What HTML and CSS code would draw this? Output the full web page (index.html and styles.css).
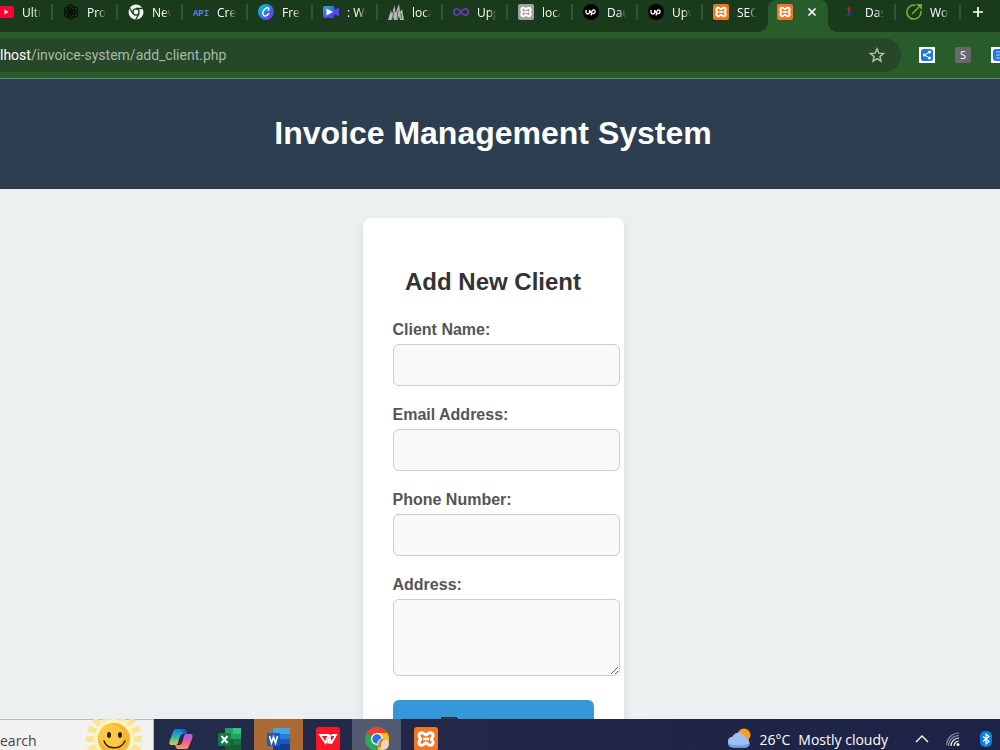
FILE: index.html
```
<!DOCTYPE html>
<html lang="en">
<head>
    <meta charset="UTF-8">
    <meta name="viewport" content="width=device-width, initial-scale=1.0">
    <title>Invoice Management System</title>
    <link rel="stylesheet" href="styles.css">
</head>
<body>
    <!-- Shared icons -->
    <svg class="sprite" aria-hidden="true">
        <symbol id="xampp" viewBox="0 0 16 16">
            <rect width="16" height="16" rx="2" fill="currentColor"/>
            <path d="M5.300 3.800C6.800 3.800 7 5.300 8 5.300S9.200 3.800 10.700 3.800c1.300 0 2 .9 2 2.100S11.500 7.500 11.500 8s1.200.9 1.200 2.100-.7 2.100-2 2.100c-1.500 0-1.700-1.500-2.700-1.500s-1.200 1.500-2.700 1.500c-1.300 0-2-.9-2-2.100S4.500 8.500 4.500 8 3.300 7.100 3.300 5.900s.7-2.100 2-2.100z" fill="none" stroke="#fff" stroke-width="2"/>
            <path d="M6 8h4" stroke="#fff" stroke-width="1.800"/>
        </symbol>
        <symbol id="upwork" viewBox="0 0 16 16">
            <circle cx="8" cy="8" r="8" fill="#000"/>
            <path d="M3 6v2.200c0 2.400 3.600 2.400 3.600 0V6c.9 2.200 1.600 3.500 3.200 3.700 2.600.2 3.300-3.700.7-3.900C8.600 5.700 8.600 8 8.200 11.500" fill="none" stroke="#fff" stroke-width="1.300"/>
        </symbol>
    </svg>

    <nav class="tabs">
        <button class="tab">
            <svg viewBox="0 0 16 16"><rect y="2" width="16" height="12" rx="3" fill="#ff0033"/><path d="M6.500 5.500v5l4-2.500z" fill="#fff"/></svg>
            <span>Ultra</span>
        </button>
        <button class="tab">
            <svg viewBox="0 0 16 16" fill="none" stroke="#0a120b" stroke-width="1.400"><ellipse cx="8" cy="5" rx="3.300" ry="4"/><ellipse cx="8" cy="11" rx="3.300" ry="4"/><ellipse cx="5.300" cy="6.500" rx="4" ry="3.300" transform="rotate(30 5.300 6.500)"/><ellipse cx="10.700" cy="9.500" rx="4" ry="3.300" transform="rotate(30 10.700 9.500)"/><ellipse cx="10.700" cy="6.500" rx="4" ry="3.300" transform="rotate(-30 10.700 6.500)"/><ellipse cx="5.300" cy="9.500" rx="4" ry="3.300" transform="rotate(-30 5.300 9.500)"/></svg>
            <span>Proje</span>
        </button>
        <button class="tab">
            <svg viewBox="0 0 16 16"><circle cx="8" cy="8" r="7.500" fill="#f2f4f2"/><circle cx="8" cy="8" r="3.700" fill="#1a3a1c"/><circle cx="8" cy="8" r="2.400" fill="#f2f4f2"/><path d="M8 4.500h6.800M4.900 9.800L1.600 4M11 9.800L7.800 15.500" stroke="#1a3a1c" stroke-width="1.300"/></svg>
            <span>New</span>
        </button>
        <button class="tab">
            <svg viewBox="0 0 16 16"><text class="api-mark" x="8" y="12" text-anchor="middle" fill="#5b83e0">API</text></svg>
            <span>Crea</span>
        </button>
        <button class="tab">
            <svg viewBox="0 0 16 16"><defs><linearGradient id="canva" x1="0" y1="0" x2="1" y2="1"><stop offset=".1" stop-color="#00c8d4"/><stop offset=".55" stop-color="#326fe8"/><stop offset=".9" stop-color="#7d2ae8"/></linearGradient></defs><circle cx="8" cy="8" r="8" fill="url(#canva)"/><path d="M10.300 6.300c1.300-1.400.3-3-1.300-2.600C6 4.500 4.300 8.300 5 10.500c.8 2.700 4.200 1.700 5.700-.8" fill="none" stroke="#fff" stroke-width="1.400" stroke-linecap="round"/></svg>
            <span>Free</span>
        </button>
        <button class="tab">
            <svg viewBox="0 0 16 16"><defs><linearGradient id="clip" x1="0" y1="0" x2="1" y2="1"><stop offset="0" stop-color="#12b8dc"/><stop offset=".6" stop-color="#4a4cf0"/><stop offset="1" stop-color="#7a25e8"/></linearGradient></defs><path d="M2 2h7.500a2 2 0 0 1 2 2v2L16 3.500v9L11.500 10v2a2 2 0 0 1-2 2H2a2 2 0 0 1-2-2V4a2 2 0 0 1 2-2z" fill="url(#clip)"/><path d="M3.500 4.500v7L10 8z" fill="#fff"/></svg>
            <span>: Wor</span>
        </button>
        <button class="tab">
            <svg viewBox="0 0 16 16"><path d="M0 16L3 6l1 4L6.500 1l1 8L11 0l1 8 2-3 2 11h-4l-1-4-1.500 4H6l-1-4-1.500 4z" fill="#b8bab8"/><path d="M4 16l2-9M9 15l1-9M13.500 15l-.5-6" stroke="#56685a" stroke-width="1"/></svg>
            <span>local</span>
        </button>
        <button class="tab">
            <svg viewBox="0 0 16 16"><path d="M8 8C6.500 5.700 5.500 4.800 4 4.800a3.200 3.200 0 0 0 0 6.400c1.500 0 2.500-.9 4-3.200s2.500-3.200 4-3.200a3.200 3.200 0 0 1 0 6.400c-1.500 0-2.500-.9-4-3.200z" fill="none" stroke="#673db3" stroke-width="1.700"/></svg>
            <span>Upgr</span>
        </button>
        <button class="tab">
            <svg class="muted-logo"><use href="#xampp"/></svg>
            <span>local</span>
        </button>
        <button class="tab">
            <svg><use href="#upwork"/></svg>
            <span>Dau</span>
        </button>
        <button class="tab">
            <svg><use href="#upwork"/></svg>
            <span>Upw</span>
        </button>
        <button class="tab before-active">
            <svg class="xampp-logo"><use href="#xampp"/></svg>
            <span>SEO</span>
        </button>
        <button class="tab active" aria-label="Add client">
            <svg class="xampp-logo"><use href="#xampp"/></svg>
            <svg class="close" viewBox="0 0 16 16"><path d="M4.500 4.500l7 7M11.500 4.500l-7 7" stroke="#fff" stroke-width="1.700"/></svg>
        </button>
        <button class="tab">
            <svg viewBox="0 0 16 16"><path d="M2 11.500l4-1.500h4l4 1.500-4 .5H6z" fill="#153f64"/><path d="M7 8h2l1 3H6z" fill="#174c80"/><path d="M8 2c2 2 2 4 .7 6H7.300C6 6 6.500 4 8 2z" fill="#b52323"/></svg>
            <span>Dash</span>
        </button>
        <button class="tab">
            <svg viewBox="0 0 16 16" fill="none" stroke="#6fad2b" stroke-width="1.700"><path d="M9.500 1.300A7 7 0 1 0 14.800 7"/><path d="M6 10l7-7"/><path d="M10 0h6v6z" fill="#6fad2b" stroke="none"/></svg>
            <span>Woo</span>
        </button>
        <button class="new-tab" aria-label="New tab">
            <svg viewBox="0 0 16 16"><path d="M8 3v10M3 8h10" stroke="#fff" stroke-width="1.700"/></svg>
        </button>
    </nav>

    <div class="toolbar">
        <div class="address-bar">
            <div class="url" role="textbox" aria-label="Address and search bar"><span class="host">lhost</span>/invoice-system/add_client.php</div>
            <button aria-label="Bookmark this tab">
                <svg viewBox="0 0 16 16"><path d="M8 1.800l1.800 4.300 4.700.4-3.600 3.100 1.100 4.600L8 11.700l-4 2.500 1.100-4.600-3.600-3.100 4.700-.4z" fill="none" stroke="#b4c2b5" stroke-width="1.400"/></svg>
            </button>
        </div>
        <div class="extensions">
            <button aria-label="Share">
                <svg viewBox="0 0 16 16"><rect width="16" height="16" fill="#fff"/><rect x="2" y="2" width="12" height="12" rx="2.500" fill="#1b78e8"/><path d="M10.500 5L5.500 8l5 3" fill="none" stroke="#fff"/><g fill="#fff"><circle cx="5.500" cy="8" r="1.500"/><circle cx="10.500" cy="5" r="1.500"/><circle cx="10.500" cy="11" r="1.500"/></g></svg>
            </button>
            <button class="ext-s">S</button>
            <button aria-label="Extension">
                <svg viewBox="0 0 16 16"><rect width="16" height="16" fill="#fff"/><rect x="2" y="2" width="12" height="12" rx="3" fill="#1b78e8"/><path d="M5 5h7M5 8h7M5 11h7" stroke="#b7d5fa"/></svg>
            </button>
        </div>
    </div>

    <main class="page">
        <header>
            <h1>Invoice Management System</h1>
        </header>
        <form class="card">
            <h2>Add New Client</h2>

            <label for="name">Client Name:</label>
            <input type="text" id="name" name="name">

            <label for="email">Email Address:</label>
            <input type="email" id="email" name="email">

            <label for="phone">Phone Number:</label>
            <input type="text" id="phone" name="phone">

            <label for="address">Address:</label>
            <textarea id="address" name="address"></textarea>

            <button type="submit" aria-label="Save client">
                <svg viewBox="0 0 18 18"><path d="M1 1h14l2 2v14H1z" fill="#c9ced3" stroke="#111" stroke-width="1.500"/></svg>
            </button>
        </form>
    </main>

    <footer class="taskbar">
        <div class="search">
            <input type="text" placeholder="earch" aria-label="Search">
            <svg viewBox="0 0 60 60">
                <g stroke="#fbe594" stroke-width="6"><path d="M30 2v56M2 30h56M10 10l40 40M50 10L10 50M19 4l22 52M41 4L19 56M4 19l52 22M4 41l52-22"/></g>
                <circle cx="30" cy="30" r="20" fill="#fff3bd"/>
                <circle cx="30" cy="30" r="16" fill="#f9b52c"/>
                <circle cx="27" cy="27" r="12" fill="#fdc944"/>
                <ellipse cx="25" cy="26" rx="2" ry="3" fill="#2b2118"/><ellipse cx="36" cy="26" rx="2" ry="3" fill="#2b2118"/>
                <path d="M20 32c3 9 17 9 21 0" fill="none" stroke="#2b2118" stroke-width="1.500" stroke-linecap="round"/>
            </svg>
        </div>
        <div class="apps">
            <button aria-label="Copilot">
                <svg viewBox="0 0 24 24"><defs><linearGradient id="cop1" x1="0" y1="0" x2="0" y2="1"><stop offset="0" stop-color="#1976dd"/><stop offset=".5" stop-color="#2bb8b0"/><stop offset="1" stop-color="#f2c62c"/></linearGradient><linearGradient id="cop2" x1="0" y1="0" x2="0" y2="1"><stop offset="0" stop-color="#a95df0"/><stop offset=".5" stop-color="#ed5c98"/><stop offset="1" stop-color="#f89858"/></linearGradient></defs><path d="M7 2h8c2 0 2 2 3 5h-4c-2 0-3 2-4 5l-1 4c-1 2-2 2-3 2H3c-3 0-3-2-2-5l3-8c1-2 1-3 3-3z" fill="url(#cop1)"/><path d="M17 22H9c-2 0-2-2-3-4h4c2 0 3-2 4-5l1-4c1-2 2-2 3-2h3c3 0 3 2 2 5l-3 7c-1 2-1 3-3 3z" fill="url(#cop2)"/><path d="M12 2h3c2 0 2 2 3 5h-4z" fill="#2359c8"/></svg>
            </button>
            <button aria-label="Excel">
                <svg viewBox="0 0 24 24"><path d="M7 1h16v11H7z" fill="#21a366"/><path d="M15 1h8v6h-8z" fill="#33c481"/><path d="M7 12h16v11H7z" fill="#185c37"/><path d="M15 12h8v6h-8z" fill="#107c41"/><rect y="6" width="13" height="13" rx="1" fill="#107c41"/><path d="M3.500 9l6 7M9.500 9l-6 7" stroke="#fff" stroke-width="2"/></svg>
            </button>
            <button class="highlight" aria-label="Word">
                <svg viewBox="0 0 24 24"><path d="M6 1h17v6H6z" fill="#41a5ee"/><path d="M6 7h17v5H6z" fill="#2b7cd3"/><path d="M6 12h17v5H6z" fill="#185abd"/><path d="M6 17h17v6H6z" fill="#103f91"/><rect y="6" width="13" height="13" rx="1" fill="#185abd"/><path d="M2.500 9l2 7 2-6 2 6 2-7" fill="none" stroke="#fff" stroke-width="1.600"/></svg>
            </button>
            <button aria-label="WPS Office">
                <svg viewBox="0 0 24 24"><rect width="24" height="24" rx="3" fill="#fb1526"/><path d="M4 8h8.500l-3 8zM14.500 8L12 15.500 15.500 16 20 8h-4.500M12.500 8l3 8" fill="none" stroke="#fff" stroke-width="1.800"/></svg>
            </button>
            <button class="current" aria-label="Chrome">
                <svg viewBox="0 0 24 24"><circle cx="12" cy="12" r="12" fill="#2fa853"/><path d="M12 12L1.600 6A12 12 0 0 1 22.400 6z" fill="#e94335"/><path d="M12 6h10.400A12 12 0 0 1 12 24l5-9z" fill="#fbbc04"/><circle cx="12" cy="12" r="6" fill="#fff"/><circle cx="12" cy="12" r="4.700" fill="#2474e5"/><circle cx="18" cy="17" r="6" fill="#ecd7b8"/><path d="M13 20c0-7 3-9 8-8-4 1-5 4-5 9z" fill="#c58a4d"/></svg>
            </button>
            <button class="xampp-logo" aria-label="XAMPP">
                <svg><use href="#xampp"/></svg>
            </button>
        </div>
        <div class="tray">
            <button class="weather">
                <svg viewBox="0 0 24 24"><circle cx="17" cy="8" r="6.500" fill="#f99c1c"/><path d="M6 20.500a5.500 5.500 0 0 1-.5-10.900 7 7 0 0 1 13 1.300A5 5 0 0 1 19 20.500z" fill="#9fc0f5"/><path d="M1 16c3 3 17 3 22 0a5 5 0 0 1-4 4.500H6A5 5 0 0 1 1 16z" fill="#769fe6"/></svg>
                <span>26°C</span>
                <span>Mostly cloudy</span>
            </button>
            <button aria-label="Show hidden icons">
                <svg viewBox="0 0 16 16"><path d="M2 11l6-6 6 6" fill="none" stroke="#fff" stroke-width="1.400"/></svg>
            </button>
            <button aria-label="Network">
                <svg viewBox="0 0 16 16" fill="none" stroke="#fff" stroke-width="1.200"><path d="M8 15a5 5 0 0 1 5-5M5 15a8 8 0 0 1 8-8"/><path d="M2.500 15A10.500 10.500 0 0 1 13 4.500M.6 14A12.500 12.500 0 0 1 13 2" stroke="#8a90a5"/><circle cx="12" cy="13.500" r="1.500" fill="#fff" stroke="none"/></svg>
            </button>
            <button aria-label="Bluetooth">
                <svg viewBox="0 0 16 16"><rect x="2" width="12" height="16" rx="5" fill="#0b7de3"/><path d="M5 5.500l6 5L8 13V3l3 2.500-6 5" fill="none" stroke="#fff" stroke-width="1.200"/></svg>
            </button>
        </div>
    </footer>
</body>
</html>
```
FILE: styles.css
```
* {
    box-sizing: border-box;
}
body {
    display: flex;
    flex-direction: column;
    height: 100vh;
    margin: 0;
    overflow: hidden;
    font-family: "Open Sans", "Noto Sans", sans-serif;
}
button {
    padding: 0;
    border: none;
    background: none;
    color: inherit;
    font-family: inherit;
    cursor: pointer;
}
svg {
    display: block;
    flex-shrink: 0;
}
.sprite {
    position: absolute;
    width: 0;
    height: 0;
}
.xampp-logo {
    color: #f37623;
}
.muted-logo {
    color: #a3a3a3;
}

/* Browser tabs */
.tabs {
    display: flex;
    flex-shrink: 0;
    height: 32px;
    margin-left: -13px; /* first tab is scrolled partly out of view */
    background-color: #1a3a1c;
    color: #fff;
}
.tab {
    position: relative;
    display: flex;
    flex-shrink: 0;
    align-items: center;
    gap: 8px;
    width: 65px;
    height: 24px;
    padding-left: 11px;
    font-size: 12px;
}
.tab svg,
.new-tab svg,
.toolbar svg {
    width: 16px;
    height: 16px;
}
.tab span {
    width: 19px;
    overflow: hidden;
    text-align: left;
    white-space: nowrap;
    -webkit-mask-image: linear-gradient(to right, #000 60%, transparent);
    mask-image: linear-gradient(to right, #000 60%, transparent);
}
.tab::after {
    content: "";
    position: absolute;
    top: 4px;
    right: -1px;
    width: 2px;
    height: 16px;
    background-color: #285d2b;
}
.api-mark {
    font: bold 9px "Liberation Mono", monospace;
}
.before-active::after {
    display: none;
}
.tab.active {
    gap: 11px;
    width: 60px;
    height: 32px;
    margin: 0 2px 0 1px;
    padding: 0 0 8px 9px;
    border-radius: 8px 8px 0 0;
    background-color: #285d2b;
}
/* Curved feet of the active tab */
.tab.active::before,
.tab.active::after {
    content: "";
    position: absolute;
    top: auto;
    bottom: 0;
    width: 10px;
    height: 10px;
}
.tab.active::before {
    right: 100%;
    background: radial-gradient(circle at 0 0, transparent 10px, #285d2b 10px);
}
.tab.active::after {
    right: auto;
    left: 100%;
    background: radial-gradient(circle at 100% 0, transparent 10px, #285d2b 10px);
}
.new-tab {
    height: 24px;
    padding-left: 10px;
}

/* Toolbar */
.toolbar {
    display: flex;
    flex-shrink: 0;
    align-items: center;
    gap: 18px;
    height: 47px;
    border-bottom: 1px solid #63866a;
    background-color: #285d2b;
}
.address-bar {
    display: flex;
    flex: 1;
    align-items: center;
    justify-content: space-between;
    height: 34px;
    padding-right: 16px;
    border-radius: 0 17px 17px 0;
    background-color: #264829;
}
.url {
    color: #a9b9aa;
    font-family: Roboto, "Open Sans", sans-serif;
    font-size: 14px;
}
.host {
    color: #fff;
}
.extensions {
    display: flex;
    gap: 20px;
    width: 81px;
    overflow: hidden;
}
.ext-s {
    flex-shrink: 0;
    width: 16px;
    height: 16px;
    border-radius: 2px;
    background-color: #696969;
    color: #fff;
    font-size: 11px;
    line-height: 16px;
}

/* Invoice page */
.page {
    flex: 1;
    min-height: 0;
    overflow: hidden;
    background-color: #ecf0f1;
    font-family: Arial, "Liberation Sans", sans-serif;
}
.page header {
    padding: 15px 14px 15px 0;
    background-color: #2c3e50;
    color: #fff;
    text-align: center;
}
h1 {
    margin: 20px 0 22px;
    font-size: 32px;
    line-height: 38px;
}
.card {
    width: 261px;
    margin: 29px auto;
    padding: 30px;
    position: relative;
    right: 7px;
    border-radius: 8px;
    background-color: #fff;
    box-shadow: 0 4px 10px rgba(0, 0, 0, 0.1);
}
h2 {
    margin: 20px 0 26px;
    color: #333;
    font-size: 24px;
    line-height: 27px;
    text-align: center;
}
label {
    display: block;
    margin-bottom: 5px;
    color: #555;
    font-size: 16px;
    font-weight: bold;
    line-height: 18px;
}
.card input,
.card textarea {
    display: block;
    box-sizing: content-box;
    width: 100%;
    height: 16px;
    margin: 0 0 20px;
    padding: 12px;
    border: 1px solid #ccc;
    border-radius: 6px;
    background-color: #f9f9f9;
    font-size: 16px;
}
.card textarea {
    height: 51px;
    margin-bottom: 24px;
    resize: vertical;
}
.card button {
    width: 100%;
    padding: 17px 48px;
    border-radius: 6px;
    background-color: #3498db;
}
.card button svg {
    width: 18px;
    height: 18px;
}

/* Taskbar */
.taskbar {
    display: flex;
    flex-shrink: 0;
    height: 31px;
    overflow: hidden;
    background: linear-gradient(to right, #202e4c, #242747 45%, #1b2347);
    color: #fff;
}
.search {
    display: flex;
    justify-content: space-between;
    width: 154px;
    height: 42px;
    padding-right: 9px;
    border-top: 1px solid #b9b9b9;
    border-right: 1px solid #b9b9b9;
    background-color: #f2f2f2;
}
.search input {
    width: 70px;
    height: 40px;
    padding: 0;
    border: none;
    background: none;
    font-family: inherit;
    font-size: 14px;
}
.search input::placeholder {
    color: #444;
}
.search svg {
    width: 60px;
    height: 60px;
    margin-top: -11px;
}
.apps {
    display: flex;
    margin-left: 2px;
}
.apps button {
    display: flex;
    justify-content: center;
    width: 49px;
    padding-top: 8px;
}
.apps svg,
.weather svg {
    width: 24px;
    height: 24px;
}
.highlight {
    background-color: #a96a35;
}
.current {
    background-color: #545a70;
}
.tray {
    display: flex;
    align-items: center;
    gap: 16px;
    height: 40px;
    margin-left: auto;
    padding-right: 6px;
}
.tray svg {
    width: 16px;
    height: 16px;
}
.tray .weather {
    display: flex;
    align-items: center;
    gap: 8px;
    margin-right: 10px;
    font-size: 14px;
}
.tray .weather svg {
    width: 24px;
    height: 24px;
}
```
